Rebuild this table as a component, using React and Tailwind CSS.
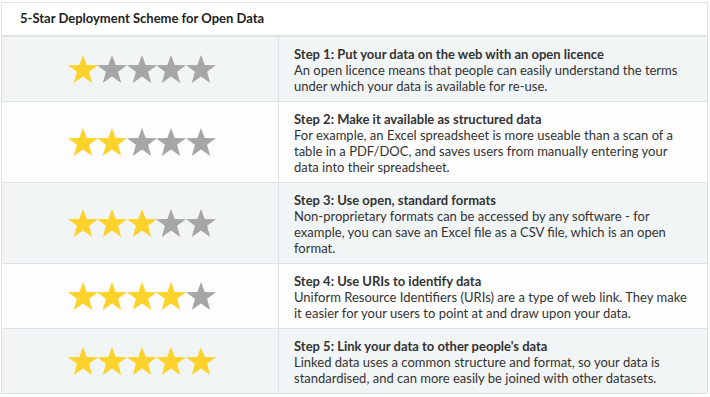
const steps = [
  {
    stars: 1,
    title: 'Step 1: Put your data on the web with an open licence',
    text: 'An open licence means that people can easily understand the terms under which your data is available for re-use.',
  },
  {
    stars: 2,
    title: 'Step 2: Make it available as structured data',
    text: 'For example, an Excel spreadsheet is more useable than a scan of a table in a PDF/DOC, and saves users from manually entering your data into their spreadsheet.',
  },
  {
    stars: 3,
    title: 'Step 3: Use open, standard formats',
    text: 'Non-proprietary formats can be accessed by any software - for example, you can save an Excel file as a CSV file, which is an open format.',
  },
  {
    stars: 4,
    title: 'Step 4: Use URIs to identify data',
    text: 'Uniform Resource Identifiers (URIs) are a type of web link. They make it easier for your users to point at and draw upon your data.',
  },
  {
    stars: 5,
    title: "Step 5: Link your data to other people's data",
    text: 'Linked data uses a common structure and format, so your data is standardised, and can more easily be joined with other datasets.',
  },
];

function Star({ on }) {
  return (
    <svg width="30" height="28" viewBox="0 0 30 28" className="-mx-[0.25px]">
      <polygon
        points="15,0 18.7,10 30,10.3 21.1,16.8 24.2,28 15,21.4 5.8,28 8.9,16.8 0,10.3 11.3,10"
        fill={on ? '#fdd22b' : '#a6a6a6'}
      />
    </svg>
  );
}

export default function App() {
  return (
    <div className="w-[710px] h-[397px] bg-white pt-[2px] pl-[1px] font-['Lato',sans-serif] text-[#333]">
      <div className="w-[707px] border border-[#dfe3e5]">
        <div className="h-[34px] flex items-center pl-[18px] text-[13px] font-bold text-[#222] border-b-2 border-[#dfe3e5]">
          5-Star Deployment Scheme for Open Data
        </div>
        {steps.map((s, i) => (
          <div
            key={s.stars}
            className={`grid grid-cols-[277px_1fr] ${i % 2 === 0 ? 'bg-[#f2f5f6]' : 'bg-[#fdfdfd]'} ${i > 0 ? 'border-t border-[#dfe3e5]' : ''}`}
          >
            <div className="flex items-center justify-center border-r border-[#dfe3e5] pl-[3px]">
              {[1, 2, 3, 4, 5].map((n) => (
                <Star key={n} on={n <= s.stars} />
              ))}
            </div>
            <div className="pl-[15px] pr-[20px] pt-[9px] pb-[7px] text-[13px] leading-[16px]">
              <p className="font-bold">{s.title}</p>
              <p>{s.text}</p>
            </div>
          </div>
        ))}
      </div>
    </div>
  );
}
